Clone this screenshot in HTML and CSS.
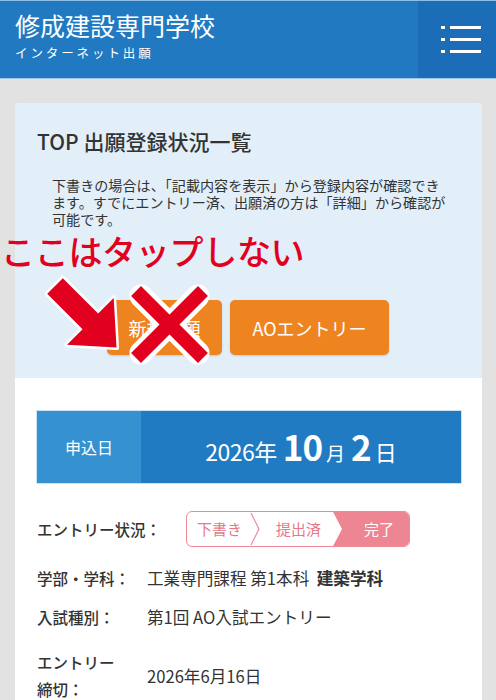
FILE: index.html
```html
<!DOCTYPE html>
<html lang="ja">
<head>
<meta charset="utf-8">
<title>修成建設専門学校 インターネット出願</title>
<link rel="stylesheet" href="styles.css">
</head>
<body>
<header class="site-header">
  <div class="brand">
    <div class="brand-title">修成建設専門学校</div>
    <div class="brand-sub">インターネット出願</div>
  </div>
  <button class="menu-btn" aria-label="メニュー">
    <svg width="44" height="30" viewBox="0 0 44 30">
      <rect x="2" y="2" width="4" height="3" fill="#fff"/>
      <rect x="11" y="2" width="31" height="3" fill="#fff"/>
      <rect x="2" y="14" width="4" height="3" fill="#fff"/>
      <rect x="11" y="14" width="31" height="3" fill="#fff"/>
      <rect x="2" y="26" width="4" height="3" fill="#fff"/>
      <rect x="11" y="26" width="31" height="3" fill="#fff"/>
    </svg>
  </button>
</header>

<main class="main">
  <section class="card">
    <div class="card-top">
      <h1 class="card-title">TOP 出願登録状況一覧</h1>
      <p class="card-note">下書きの場合は、「記載内容を表示」から登録内容が確認できます。すでにエントリー済、出願済の方は「詳細」から確認が可能です。</p>
      <div class="btn-row">
        <a class="btn btn-new">新規出願</a>
        <a class="btn btn-ao">AOエントリー</a>
      </div>
      <div class="annot-text">ここはタップしない</div>
    </div>

    <div class="card-body">
      <div class="date-bar">
        <div class="date-label">申込日</div>
        <div class="date-value"><span class="d-year">2026年</span><span class="d-num">10</span><span class="d-unit">月</span><span class="d-num">2</span><span class="d-unit2">日</span></div>
      </div>

      <div class="row row-status">
        <div class="label">エントリー状況：</div>
        <div class="status">
          <span class="st st-1">下書き</span>
          <svg class="chev" width="10" height="34" viewBox="0 0 10 34"><polyline points="1,1 9,17 1,33" fill="none" stroke="#ec8a97" stroke-width="1.2"/></svg>
          <span class="st st-2">提出済</span>
          <span class="st st-3">完了</span>
        </div>
      </div>
      <div class="row row-dept">
        <div class="label">学部・学科：</div>
        <div class="value">工業専門課程 第1本科&nbsp;&nbsp;<b>建築学科</b></div>
      </div>
      <div class="row row-type">
        <div class="label">入試種別：</div>
        <div class="value">第1回 AO入試エントリー</div>
      </div>
      <div class="row row-deadline">
        <div class="label">エントリー<br>締切：</div>
        <div class="value">2026年6月16日</div>
      </div>
    </div>
  </section>
</main>

<svg class="annot-shapes" width="496" height="700" viewBox="0 0 496 700">
  <g transform="translate(55 286) rotate(45)">
    <polygon points="0,-11 50,-11 50,-33 87,0 50,33 50,11 0,11" fill="#e1001e" stroke="#fff" stroke-width="5" stroke-linejoin="round" paint-order="stroke"/>
  </g>
  <g>
    <line x1="141" y1="296" x2="198" y2="353" stroke="#fff" stroke-width="23" stroke-linecap="round"/>
    <line x1="198" y1="296" x2="141" y2="353" stroke="#fff" stroke-width="23" stroke-linecap="round"/>
    <line x1="141" y1="296" x2="198" y2="353" stroke="#e1001e" stroke-width="14" stroke-linecap="square"/>
    <line x1="198" y1="296" x2="141" y2="353" stroke="#e1001e" stroke-width="14" stroke-linecap="square"/>
  </g>
</svg>
</body>
</html>
```

FILE: styles.css
```css
* { box-sizing: border-box; }
html, body { margin: 0; padding: 0; }
body {
  background: #e2e2e2;
  font-family: "Noto Sans CJK JP", "Noto Sans", sans-serif;
  color: #333;
  width: 496px;
  height: 700px;
  overflow: hidden;
  position: relative;
}

.site-header {
  height: 79px;
  display: flex;
  background: #2179c2;
  border-top: 1px solid #8fbde3;
  border-bottom: 1px solid #9ec6e6;
}
.brand {
  flex: 1;
  padding: 6px 0 0 15px;
  color: #fff;
}
.brand-title {
  font-size: 25px;
  line-height: 36px;
}
.brand-sub {
  font-size: 12.5px;
  line-height: 20px;
  letter-spacing: 2.9px;
}
.menu-btn {
  width: 78px;
  border: 0;
  padding: 0;
  background: #1c6db7;
  display: flex;
  align-items: center;
  justify-content: center;
}
.menu-btn svg { margin-left: 8px; margin-top: -2px; }

.main {
  padding: 24px 14px 0 15px;
}
.card {
  background: #fff;
  border-radius: 4px;
}
.card-top {
  background: #e2eff9;
  border-radius: 4px 4px 0 0;
  padding: 25px 20px 23px 22px;
  position: relative;
}
.card-title {
  margin: 0;
  font-size: 21px;
  line-height: 26px;
  font-weight: 500;
  color: #333;
}
.card-note {
  margin: 23px 0 0 15px;
  font-size: 14.1px;
  line-height: 17px;
  color: #333;
  width: 400px;
}
.btn-row {
  display: flex;
  gap: 8px;
  margin: 72px 0 0 70px;
}
.btn {
  height: 55px;
  display: flex;
  align-items: center;
  justify-content: center;
  background: #ee841f;
  color: #fff;
  border-radius: 5px;
  font-size: 18px;
  box-shadow: 0 1px 2px rgba(0,0,0,0.15);
}
.btn-new { width: 115px; }
.btn-ao { width: 159px; }

.annot-text {
  position: absolute;
  left: -14px;
  top: 128px;
  font-size: 34px;
  line-height: 40px;
  font-weight: 500;
  color: #e1001e;
  letter-spacing: -0.3px;
  white-space: nowrap;
}

.annot-shapes {
  position: absolute;
  left: 0;
  top: 0;
  pointer-events: none;
}

.card-body {
  padding: 33px 21px 0 22px;
}
.date-bar {
  display: flex;
  height: 72px;
  background: #217bc3;
  box-shadow: 0 0 0 1px #cde3f3;
}
.date-label {
  width: 104px;
  background: #3591d0;
  color: #fff;
  font-size: 16px;
  display: flex;
  align-items: center;
  justify-content: center;
}
.date-value {
  flex: 1;
  display: flex;
  align-items: baseline;
  justify-content: center;
  color: #fff;
  padding-top: 16px;
  line-height: 38px;
}
.d-year { font-size: 23px; letter-spacing: -0.5px; }
.d-num { font-size: 35px; font-weight: 700; margin: 0 4px 0 6px; letter-spacing: -1px; }
.d-unit { font-size: 19px; }
.d-unit2 { font-size: 22px; }

.row {
  display: flex;
  align-items: center;
  font-size: 16.6px;
  line-height: 24px;
  color: #333;
}
.row .label {
  width: 110px;
  flex: none;
  font-size: 15.5px;
  font-weight: 500;
}
.row-status {
  margin-top: 28px;
}
.row-status .label {
  width: auto;
  margin-right: 25px;
}
.status {
  display: flex;
  align-items: center;
  height: 36px;
  width: 224px;
  border: 1px solid #ec8a97;
  border-radius: 6px;
  overflow: hidden;
  color: #e6788a;
}
.st { line-height: 34px; font-size: 15px; }
.st-1 { margin-left: 10px; margin-right: 8px; }
.chev { flex: none; }
.st-2 { margin-left: 16px; }
.st-3 {
  margin-left: 12px;
  flex: 1;
  align-self: stretch;
  background: #ee8593;
  color: #fff;
  padding-left: 31px;
  clip-path: polygon(0 0, 100% 0, 100% 100%, 0 100%, 9px 50%);
}
.row-dept { margin-top: 19px; }
.row-type { margin-top: 15px; }
.row-deadline { margin-top: 20px; }
.row-deadline .label { line-height: 27px; }
b { font-weight: 700; }
```
